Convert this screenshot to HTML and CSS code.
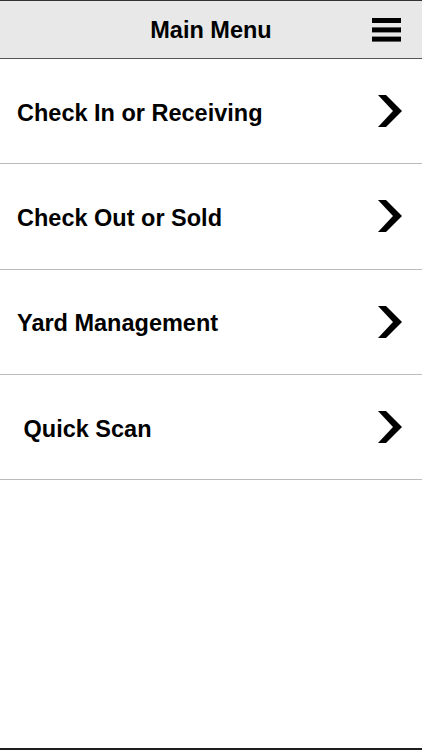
FILE: index.html
```html
<!DOCTYPE html>
<html lang="en">

<head>
    <meta charset="UTF-8">
    <title>Main Menu</title>
    <link rel="stylesheet" href="styles.css">
</head>

<body>
<div class="screen">
    <header class="topBar">
        <h1 class="title">Main Menu</h1>
        <button class="menuBtn" aria-label="Menu">
            <svg width="29" height="24" viewBox="0 0 29 24">
                <rect x="0" y="0" width="29" height="5" fill="#000"/>
                <rect x="0" y="9.4" width="29" height="5" fill="#000"/>
                <rect x="0" y="18.6" width="29" height="5" fill="#000"/>
            </svg>
        </button>
    </header>
    <ul class="menuList">
        <li class="menuItem">
            <span class="itemLabel">Check In or Receiving</span>
            <svg class="chevron" width="24" height="32" viewBox="0 0 24 32">
                <polygon points="0,0 8,0 24,16 8,32 0,32 15,16" fill="#000"/>
            </svg>
        </li>
        <li class="menuItem">
            <span class="itemLabel">Check Out or Sold</span>
            <svg class="chevron" width="24" height="32" viewBox="0 0 24 32">
                <polygon points="0,0 8,0 24,16 8,32 0,32 15,16" fill="#000"/>
            </svg>
        </li>
        <li class="menuItem">
            <span class="itemLabel">Yard Management</span>
            <svg class="chevron" width="24" height="32" viewBox="0 0 24 32">
                <polygon points="0,0 8,0 24,16 8,32 0,32 15,16" fill="#000"/>
            </svg>
        </li>
        <li class="menuItem">
            <span class="itemLabel">&nbsp;Quick Scan</span>
            <svg class="chevron" width="24" height="32" viewBox="0 0 24 32">
                <polygon points="0,0 8,0 24,16 8,32 0,32 15,16" fill="#000"/>
            </svg>
        </li>
    </ul>
</div>
</body>

</html>
```

FILE: styles.css
```css
body {
    font-family: 'Liberation Sans', Arial, sans-serif;
    margin: 0;
    background-color: #ffffff;
}

.screen {
    height: 100vh;
    box-sizing: border-box;
    display: flex;
    flex-direction: column;
    border-top: 1px solid #333333;
    border-bottom: 2px solid #1e1e1e;
}

.topBar {
    height: 58px;
    flex-shrink: 0;
    box-sizing: border-box;
    display: flex;
    align-items: center;
    justify-content: center;
    position: relative;
    background-color: #e8e8e8;
    border-bottom: 1px solid #555555;
}

.title {
    margin: 0;
    font-size: 23.5px;
    font-weight: bold;
    color: #000000;
    padding-top: 1px;
}

.menuBtn {
    position: absolute;
    right: 21px;
    top: 17px;
    padding: 0;
    border: none;
    background: none;
    display: flex;
    cursor: pointer;
}

.menuList {
    list-style: none;
    margin: 0;
    padding: 0;
}

.menuItem {
    height: 105.3px;
    box-sizing: border-box;
    display: flex;
    align-items: center;
    justify-content: space-between;
    padding: 0 20px 0 17px;
    border-bottom: 1px solid #bcbcbc;
}

.itemLabel {
    font-size: 23.5px;
    font-weight: bold;
    color: #000000;
    padding-top: 4px;
}

.chevron {
    display: block;
}
```
